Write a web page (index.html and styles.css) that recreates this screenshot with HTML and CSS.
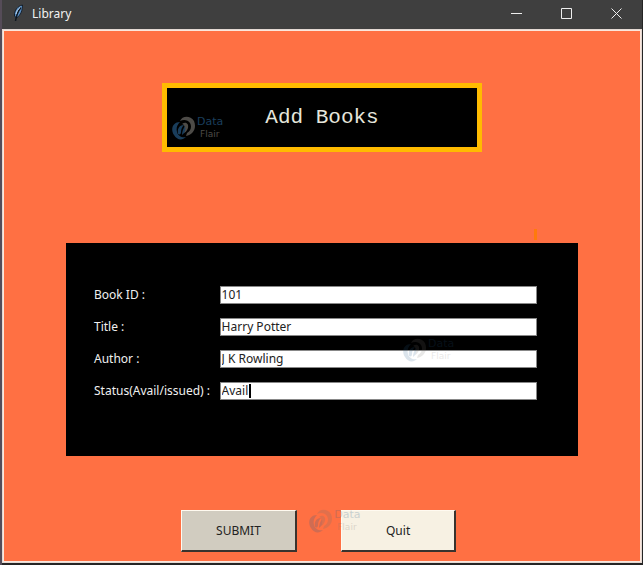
FILE: index.html
```html
<!DOCTYPE html>
<html lang="en">
<head>
<meta charset="utf-8">
<title>Library</title>
<link rel="stylesheet" href="styles.css">
</head>
<body>
<svg class="defs" aria-hidden="true">
  <symbol id="rings" viewBox="0 0 24 24">
    <path class="ring-grey" d="M8 5C10 0 18-1 22 5C25 12 21 19 14 20L15 17C19 15 20 10 18 7C16 4 12 3 8 5Z"/>
    <path class="ring-grey" d="M10 8C14 5 17 8 16 12C15 15 13 17 11 17C13 14 14 9 10 8Z"/>
    <path class="ring-blue" d="M8 6C1 6-2 13 2 19C5 24 10 25 14 21C10 22 6 20 5 16C4 12 5 9 8 6Z"/>
    <path class="ring-blue" d="M12 9C7 9 5 13 6 18C8 19 9 18 9 16C9 13 10 11 12 9Z"/>
    <path class="ring-blue" d="M13 10C14 14 13 17 10 19C10 16 11 13 13 10Z"/>
  </symbol>
</svg>
<div class="window">
  <header class="titlebar">
    <svg class="feather" viewBox="0 0 12 18" aria-hidden="true">
      <path d="M10.500 1C6 2 2 6 2.500 12L4.500 14C9 11 10.500 6 10.500 1Z" fill="#5a8fc4" stroke="#15202c"/>
      <path d="M9 3.500C6 7 4.500 11 3.500 17" fill="none" stroke="#101820" stroke-width="1.500"/>
      <path d="M8.500 3C6 5 4.500 7.500 4 10" fill="none" stroke="#b9d5ee"/>
    </svg>
    <span class="caption">Library</span>
    <button class="control" aria-label="Minimize"><svg viewBox="0 0 11 11"><path d="M0 5.500H11"/></svg></button>
    <button class="control" aria-label="Maximize"><svg viewBox="0 0 11 11"><path d="M.5 .5H10.500V10.500H.5Z"/></svg></button>
    <button class="control" aria-label="Close"><svg viewBox="0 0 11 11"><path d="M.5 .5L10.500 10.500M10.500 .5L.5 10.500"/></svg></button>
  </header>
  <main class="stage">
    <h1 class="heading">Add Books
      <span class="mark mark-heading" aria-hidden="true"><svg><use href="#rings"/></svg><span class="mark-text"><span class="mark-data">Data</span><span class="mark-flair">Flair</span></span></span>
    </h1>
    <form class="form">
      <div class="panel">
        <div class="row"><label for="book-id">Book ID :</label><input id="book-id" type="text" value="101"></div>
        <div class="row"><label for="book-title">Title :</label><input id="book-title" type="text" value="Harry Potter"></div>
        <div class="row"><label for="author">Author :</label><input id="author" type="text" value="J K Rowling"></div>
        <div class="row"><label for="status">Status(Avail/issued) :</label><input id="status" type="text" value="Avail"><span class="caret"></span></div>
        <span class="fleck"></span>
        <span class="mark mark-panel" aria-hidden="true"><svg><use href="#rings"/></svg><span class="mark-text"><span class="mark-data">Data</span><span class="mark-flair">Flair</span></span></span>
      </div>
      <div class="actions">
        <button class="button submit" type="button">SUBMIT</button>
        <button class="button quit" type="button">Quit</button>
        <span class="mark mark-actions" aria-hidden="true"><svg><use href="#rings"/></svg><span class="mark-text"><span class="mark-data">Data</span><span class="mark-flair">Flair</span></span></span>
      </div>
    </form>
  </main>
</div>
</body>
</html>
```
FILE: styles.css
```css
* { box-sizing: border-box; }

body {
  margin: 0;
  min-height: 100vh;
  padding: 0 1px 2px 2px;
  background: linear-gradient(90deg, #554c58 2px, #252525 2px);
  font: 12px/16px "Noto Sans", "Open Sans", sans-serif;
}

.defs { position: absolute; width: 0; height: 0; }

.window {
  display: flex;
  flex-direction: column;
  min-height: calc(100vh - 2px);
}

.titlebar {
  display: flex;
  align-items: center;
  height: 29px;
  padding: 0 1px 0 10px;
  background: #3f3f3f;
  color: #f2f2f2;
}

.feather { width: 12px; height: 18px; margin: 0 8px 3px 0; }
.caption { flex: 1; padding-bottom: 2px; }

.control {
  display: grid;
  place-items: center;
  width: 50px;
  height: 26px;
  padding: 0;
  border: 0;
  background: none;
  align-self: flex-start;
}

.control svg {
  width: 11px;
  height: 11px;
  fill: none;
  stroke: #eee;
}

.stage {
  flex: 1;
  padding-top: 54px;
  background: #ff7043;
  box-shadow: inset 0 0 0 1px #e3d8d2, inset 0 0 0 2px #fbe6dc;
}

.heading {
  position: relative;
  width: 50%;
  margin: 0 auto;
  padding: 18px 0 17px;
  border: 5px solid #ffbb00;
  background: #000;
  color: #e6e6dc;
  font: 21px/24px "Courier New", "Liberation Mono", monospace;
  text-align: center;
}

.form { margin-top: 91px; }

.panel {
  position: relative;
  width: 80%;
  margin: 0 auto;
  padding: 36px 0 49px;
  background: #000;
  color: #f0f0f0;
}

.row {
  position: relative;
  display: grid;
  grid-template-columns: 30% 62%;
  align-items: center;
  height: 32px;
}

.row label { padding-left: 28px; white-space: nowrap; }

.row input {
  width: 100%;
  height: 18px;
  padding: 0 1px 2px;
  border: 1px solid #888;
  border-radius: 0;
  background: #fff;
  color: #222;
  font: inherit;
}

.caret {
  position: absolute;
  left: calc(30% + 29px);
  top: 9px;
  width: 2px;
  height: 14px;
  background: #000;
}

.fleck {
  position: absolute;
  right: 41px;
  top: -14px;
  width: 3px;
  height: 11px;
  background: #ff7a0c;
}

.actions {
  position: relative;
  display: flex;
  gap: 16%;
  margin-top: 54px;
  padding: 0 29% 11px 28%;
}

.button {
  flex: 1;
  height: 42px;
  padding: 0;
  border: solid;
  border-width: 1px 2px 2px 1px;
  border-color: #fffaf0 #39332e #39332e #fffaf0;
  color: #222;
  font: inherit;
}

.submit { background: #d1ccc0; }
.quit { background: #f7f1e3; }

.mark {
  position: absolute;
  display: flex;
  gap: 1px;
  pointer-events: none;
}

.mark svg { width: 24px; height: 24px; }
.ring-blue { fill: #285f8c; }
.ring-grey { fill: #77736e; }

.mark-text {
  display: grid;
  font: 10px/12px "DejaVu Sans", sans-serif;
  text-align: left;
}

.mark-data { font-size: 11px; color: #285f8c; }
.mark-flair { padding-left: 3px; font-size: 9px; line-height: 8px; color: #77736e; }

.mark-heading { left: 5px; bottom: 7px; opacity: .65; }
.mark-panel { left: 337px; top: 95px; opacity: .16; }
.mark-actions { left: 48%; top: -1px; opacity: .22; }
```
